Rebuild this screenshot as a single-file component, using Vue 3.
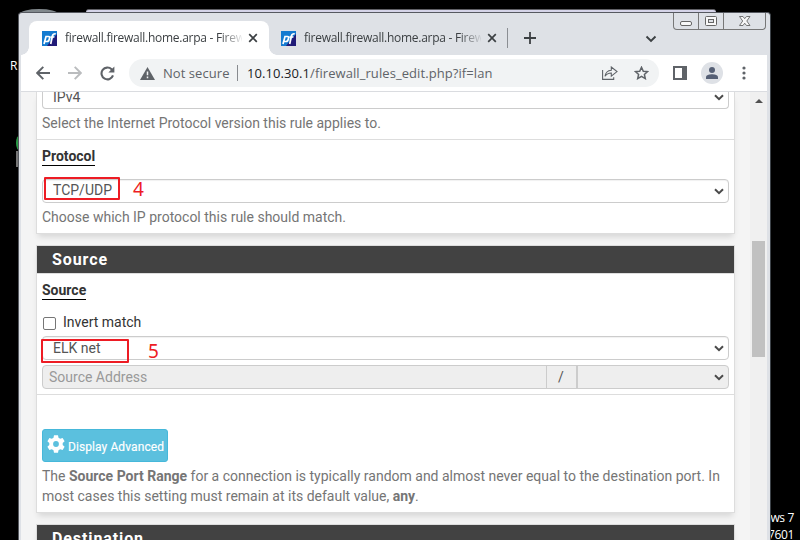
<script setup>
const tabs = [
  { title: 'firewall.firewall.home.arpa - Firew', active: true },
  { title: 'firewall.firewall.home.arpa - Firew', active: false },
]
</script>

<template>
  <div class="desktop">
    <span class="desk-label recycle">R</span>
    <span class="desk-icon green"></span>
    <span class="desk-icon gray"></span>
    <div class="desk-build"><span>Windows 7</span><span>Build 7601</span></div>
    <div class="back-window"></div>
    <div class="back-orb"></div>

    <div class="window">
      <div class="tabstrip">
        <div v-for="(tab, i) in tabs" :key="i" class="tab" :class="{ active: tab.active }">
          <svg class="favicon" width="15" height="15" viewBox="0 0 15 15">
            <rect width="15" height="15" fill="#211b78" />
            <path d="M0 0H15V3L8 11L5 15H0Z" fill="#147bd0" />
            <path d="M2 13L4 5.5H6.5Q8 5.5 7.5 7.5Q7 10.5 5 10.5H3.2M8.7 13L10.4 5Q11 2.5 13.7 2.8M8.5 6H12.4" fill="none" stroke="#fff" stroke-width="1.7" />
          </svg>
          <span class="tab-title">{{ tab.title }}</span>
          <svg class="close" width="10" height="10" viewBox="0 0 10 10"><path d="M1.2 1.2L8.8 8.8M8.8 1.2L1.2 8.8" stroke="#3c4043" stroke-width="1.7" /></svg>
        </div>
        <span class="tab-divider"></span>
        <svg class="new-tab" width="12" height="12" viewBox="0 0 12 12"><path d="M6 0V12M0 6H12" stroke="#3c4043" stroke-width="1.8" /></svg>
        <svg class="tab-search" width="12" height="8" viewBox="0 0 12 8"><path d="M1.5 1.5L6 6L10.5 1.5" fill="none" stroke="#3c4043" stroke-width="1.9" /></svg>
        <div class="controls">
          <span><svg width="24" height="16" viewBox="0 0 24 16"><rect x="6.5" y="8.5" width="11" height="4" rx="1.5" fill="#f8f8f8" stroke="#666" /></svg></span>
          <span><svg width="24" height="16" viewBox="0 0 24 16"><rect x="6.5" y="3.5" width="11" height="9" rx="1" fill="#f8f8f8" stroke="#666" /><rect x="9.5" y="6.5" width="5" height="3" fill="#dee1e6" stroke="#666" /></svg></span>
          <span><svg width="41" height="16" viewBox="0 0 41 16"><path d="M15.5 3.5H19L20.7 5.7L22.5 3.5H26L22.8 8L26 12.5H22.5L20.7 10.2L19 12.5H15.5L18.7 8Z" fill="#f8f8f8" stroke="#666" stroke-width=".9" /></svg></span>
        </div>
      </div>

      <div class="toolbar">
        <svg class="nav back" width="14" height="14" viewBox="0 0 14 14"><path d="M14 7H1.5M7.3 .8L1.2 7L7.3 13.2" fill="none" stroke="#5f6368" stroke-width="1.9" /></svg>
        <svg class="nav forward" width="14" height="14" viewBox="0 0 14 14"><path d="M0 7H12.5M6.7 .8L12.8 7L6.7 13.2" fill="none" stroke="#babcbe" stroke-width="1.9" /></svg>
        <svg class="nav reload" width="15" height="15" viewBox="0 0 15 15"><path d="M13 9.4A5.9 5.9 0 1 1 11.6 3.3L13 4.7" fill="none" stroke="#5f6368" stroke-width="2.1" /><path d="M14.4 .6V6.5H8.4Z" fill="#5f6368" /></svg>
        <div class="omnibox">
          <svg class="warn" width="15" height="13" viewBox="0 0 15 13"><path d="M7.5 0L15 13H0Z" fill="#5f6368" /><path d="M7.5 4.5V8.2M7.5 9.5V11.2" stroke="#f1f3f4" stroke-width="1.5" /></svg>
          <span class="not-secure">Not secure</span>
          <span class="omni-divider"></span>
          <span class="url"><b>10.10.30.1</b><i>/firewall_rules_edit.php?if=lan</i></span>
          <svg class="share" width="16" height="14" viewBox="0 0 16 14"><path d="M.6 4V13.4H11.7V11.2M3 10.3C3.5 6.5 5.7 4.5 9.3 4.2V1L15 5.6L9.3 10.2V7C6.3 7 4.5 8 3 10.3Z" fill="none" stroke="#5f6368" stroke-width="1.1" /></svg>
          <svg class="star" width="15" height="14" viewBox="0 0 15 14"><path d="M7.5 1.3L9.3 5.2L13.6 5.6L10.4 8.4L11.3 12.6L7.5 10.4L3.7 12.6L4.6 8.4L1.4 5.6L5.7 5.2Z" fill="none" stroke="#5f6368" stroke-width="1.5" /></svg>
        </div>
        <svg class="side-panel" width="14" height="14" viewBox="0 0 14 14"><path d="M0 0H14V14H0ZM2 2V12H9V2Z" fill="#5f6368" fill-rule="evenodd" /></svg>
        <svg class="avatar" width="22" height="22" viewBox="0 0 22 22"><circle cx="11" cy="11" r="11" fill="#dee1e6" /><circle cx="11" cy="8" r="3" fill="#555f75" /><path d="M5 17V15.3C5 13 8.5 12.3 11 12.3S17 13 17 15.3V17Z" fill="#555f75" /></svg>
        <svg class="menu" width="4" height="14" viewBox="0 0 4 14"><circle cx="2" cy="2" r="1.6" fill="#5f6368" /><circle cx="2" cy="7" r="1.6" fill="#5f6368" /><circle cx="2" cy="12" r="1.6" fill="#5f6368" /></svg>
      </div>

      <div class="viewport">
        <main class="page">
          <section class="panel first">
            <div class="row family">
              <div class="select clipped"><span>IPv4</span><svg class="chev" width="10" height="7" viewBox="0 0 10 7"><path d="M1 1.2L5 5.2L9 1.2" /></svg></div>
              <p class="help">Select the Internet Protocol version this rule applies to.</p>
            </div>
            <div class="row protocol">
              <div class="label"><span>Protocol</span></div>
              <div class="select"><span>TCP/UDP</span><svg class="chev" width="10" height="7" viewBox="0 0 10 7"><path d="M1 1.2L5 5.2L9 1.2" /></svg></div>
              <p class="help">Choose which IP protocol this rule should match.</p>
            </div>
          </section>

          <section class="panel source">
            <h2>Source</h2>
            <div class="row source-row">
              <div class="label"><span>Source</span></div>
              <label class="check"><span class="box"></span><span>Invert match</span></label>
              <div class="select"><span>ELK net</span><svg class="chev" width="10" height="7" viewBox="0 0 10 7"><path d="M1 1.2L5 5.2L9 1.2" /></svg></div>
              <div class="group">
                <div class="address"><span>Source Address</span></div>
                <div class="slash">/</div>
                <div class="mask"><svg class="chev" width="10" height="7" viewBox="0 0 10 7"><path d="M1 1.2L5 5.2L9 1.2" /></svg></div>
              </div>
            </div>
            <div class="row advanced">
              <div class="button">
                <svg width="18" height="18" viewBox="0 0 18 18"><path fill="#fff" fill-rule="evenodd" d="M7 .3H11L11.5 2.8L13.2 3.7L15.6 2.9L17.6 6.3L15.7 8V10L17.6 11.7L15.6 15.1L13.2 14.3L11.5 15.2L11 17.7H7L6.5 15.2L4.8 14.3L2.4 15.1L.4 11.7L2.3 10V8L.4 6.3L2.4 2.9L4.8 3.7L6.5 2.8ZM9 6.1A2.9 2.9 0 1 0 9 11.9A2.9 2.9 0 1 0 9 6.1Z" /></svg>
                <span>Display Advanced</span>
              </div>
              <p class="help long">The <b>Source Port Range</b> for a connection is typically random and almost never equal to the destination port. In<br>most cases this setting must remain at its default value, <b>any</b>.</p>
            </div>
          </section>

          <section class="panel destination"><h2>Destination</h2></section>
        </main>
        <div class="scrollbar"><span class="arrow"></span><span class="thumb"></span></div>
      </div>
    </div>

    <div class="mark m4"></div><span class="num n4">4</span>
    <div class="mark m5"></div><span class="num n5">5</span>
  </div>
</template>

<style>
body { margin: 0; background: #000; overflow: hidden; }
</style>

<style scoped>
* { box-sizing: border-box; }
svg { display: block; flex: none; }
.desktop { position: relative; width: 800px; height: 540px; overflow: hidden; background: #000; padding: 12px 0 0 18px; }
.desk-label, .desk-build { position: absolute; color: #fff; font: 12px/17px "Open Sans", sans-serif; }
.recycle { left: 10px; top: 57px; }
.desk-icon { position: absolute; left: 16px; width: 8px; }
.green { top: 135px; height: 16px; border-radius: 50%; background: #2b9b47; }
.gray { top: 151px; height: 16px; background: #777; }
.desk-build { right: 6px; top: 509px; display: flex; flex-direction: column; align-items: flex-end; letter-spacing: -.35px; }
.desk-build span { height: 17px; white-space: nowrap; }
.back-window { position: absolute; left: 86px; top: 9px; width: 630px; height: 10px; background: #d5d4e8; border-top: 1px solid #606066; border-radius: 3px; }
.back-orb { position: absolute; left: 20px; top: 9px; width: 38px; height: 10px; border-radius: 50%; background: #82898d; }
.window { position: relative; width: 753px; height: 540px; border: 1px solid #565960; border-right-color: #3d4349; border-radius: 4px 4px 0 0; background: #dee1e6; padding: 0 3px 0 2px; }
.tabstrip { height: 42px; display: flex; align-items: flex-start; padding-left: 8px; }
.tab { height: 34px; margin-top: 8px; display: flex; align-items: center; width: 240px; padding-left: 13px; border-radius: 8px 8px 0 0; }
.tab.active { background: #fff; position: relative; }
.tab.active::before, .tab.active::after { content: ''; position: absolute; bottom: 0; width: 8px; height: 8px; }
.tab.active::before { left: -8px; background: radial-gradient(circle at 0 0, #dee1e6 7.5px, #fff 8px); }
.tab.active::after { right: -8px; background: radial-gradient(circle at 100% 0, #dee1e6 7.5px, #fff 8px); }
.favicon { margin-right: 8px; }
.tab:not(.active) { padding-left: 12px; width: 233px; }
.tab-title { width: 177px; white-space: nowrap; font: 12px/16px "Open Sans", sans-serif; letter-spacing: -.27px; color: #3c4043; -webkit-mask-image: linear-gradient(90deg, #000 155px, transparent 179px); mask-image: linear-gradient(90deg, #000 155px, transparent 179px); }
.close { margin-left: 6px; }
.tab-divider { width: 1px; height: 20px; margin-top: 15px; margin-left: 5px; background: #8b8e93; }
.new-tab { margin: 19px 0 0 16px; }
.tab-search { margin: 22px 0 0 109px; }
.controls { display: flex; height: 17px; width: 93px; margin-left: 16px; border: 1px solid #777; border-top: 0; border-radius: 0 0 4px 4px; }
.controls span + span { border-left: 1px solid #777; }
.toolbar { height: 37px; background: #fff; border-bottom: 1px solid #dadce0; display: flex; align-items: center; }
.nav.back { margin-left: 15px; }
.nav.forward { margin-left: 18px; }
.nav.reload { margin-left: 18px; }
.omnibox { width: 530px; height: 28px; margin-left: 14px; border-radius: 14px; background: #f1f3f4; display: flex; align-items: center; font: 13px/20px "Open Sans", sans-serif; color: #5f6368; white-space: nowrap; }
.warn { margin-left: 11px; }
.not-secure { width: 67px; margin-left: 8px; letter-spacing: .06px; }
.omni-divider { width: 1px; height: 16px; background: #888b8f; margin-left: 7px; }
.url { width: 353px; margin-left: 9px; letter-spacing: .08px; }
.url b { color: #202124; font-weight: 400; }
.url i { font-style: normal; }
.share { margin-left: 2px; }
.star { margin-left: 16px; }
.side-panel { margin-left: 14px; }
.avatar { margin-left: 14px; }
.menu { margin-left: 19px; }
.viewport { display: flex; height: 448px; overflow: hidden; }
.page { width: 729px; background: #f4f4f4; padding: 0 0 0 15px; font: 14px/20px Roboto, sans-serif; color: #757575; }
.panel { width: 699px; border: 1px solid #ddd; background: #fff; box-shadow: 0 5px 6px -2px rgba(0,0,0,.12); }
.row { padding: 0 5px; }
.row + .row { border-top: 1px solid #ddd; }
.first { height: 142px; border-top: 0; }
.family { height: 47px; }
.select { width: 687px; height: 24px; border: 1px solid #ccc; border-radius: 4px; background: #fff; display: flex; align-items: flex-start; justify-content: space-between; padding: 0 4px 0 10px; color: #555; box-shadow: inset 0 1px 1px rgba(0,0,0,.06); }
.chev { fill: none; stroke: #4a4a4a; stroke-width: 2; margin-top: 8px; }
.select.clipped { height: 17px; border-top: 0; border-radius: 0 0 4px 4px; box-shadow: none; align-items: center; padding-bottom: 6px; }
.select.clipped .chev { margin-top: 0; }
.help { margin: 0; white-space: nowrap; }
.family .help { padding-top: 4px; }
.label { height: 33px; color: #333; font-weight: 700; }
.label span { display: inline-block; height: 19px; border-bottom: 1px solid #000; line-height: 18px; }
.protocol { padding-top: 6px; height: 94px; }
.protocol .help { padding-top: 4px; }
.source { margin-top: 11px; height: 268px; }
h2 { margin: 0; height: 27px; background: #424242; color: #fff; font: 700 16px/28px Roboto, sans-serif; letter-spacing: .9px; padding-left: 15px; }
.source-row { height: 121px; border-top: 1px solid #ddd; padding-top: 6px; }
.source-row .label { height: 32px; }
.check { height: 24px; display: flex; color: #333; line-height: 20px; }
.box { width: 13px; height: 13px; border: 1px solid #767676; border-radius: 2px; margin: 5px 7px 0 1px; background: #fff; }
.source-row .select span { padding-top: 1px; }
.group { display: flex; width: 687px; height: 24px; margin-top: 5px; border: 1px solid #ccc; border-radius: 4px; background: #eee; overflow: hidden; line-height: 22px; }
.address { width: 503px; padding-left: 6px; color: #999; }
.slash { width: 31px; border-left: 1px solid #ccc; border-right: 1px solid #ccc; text-align: center; color: #555; padding-right: 1px; }
.mask { flex: 1; border-left: 1px solid #ccc; display: flex; align-items: flex-start; justify-content: flex-end; padding-right: 4px; }
.advanced { padding-top: 34px; }
.button { width: 126px; height: 33px; border: 1px solid #46b8da; border-radius: 3px; background: #5bc0de; display: flex; color: #fff; font-size: 12px; padding: 5px 0 0 4px; white-space: nowrap; }
.button span { margin: 2px 0 0 3px; letter-spacing: .09px; -webkit-text-stroke: .15px #fff; }
.long { padding-top: 4px; }
.destination { margin-top: 11px; }
.scrollbar { width: 17px; background: #f0f0f0; padding: 7px 0 0 2px; }
.arrow { display: block; margin-left: 3px; width: 0; height: 0; border: 4px solid transparent; border-top: 0; border-bottom-color: #505050; }
.thumb { display: block; width: 13px; height: 116px; margin-top: 138px; background: #c1c1c1; }
.mark { position: absolute; border: 2px solid #ed1c24; border-radius: 1px; }
.m4 { left: 44px; top: 177px; width: 76px; height: 23px; }
.m5 { left: 41px; top: 339px; width: 88px; height: 24px; }
.num { position: absolute; color: #ed1c24; font: 19px/20px "Noto Sans", sans-serif; }
.n4 { left: 133px; top: 179px; }
.n5 { left: 148px; top: 341px; }
</style>
